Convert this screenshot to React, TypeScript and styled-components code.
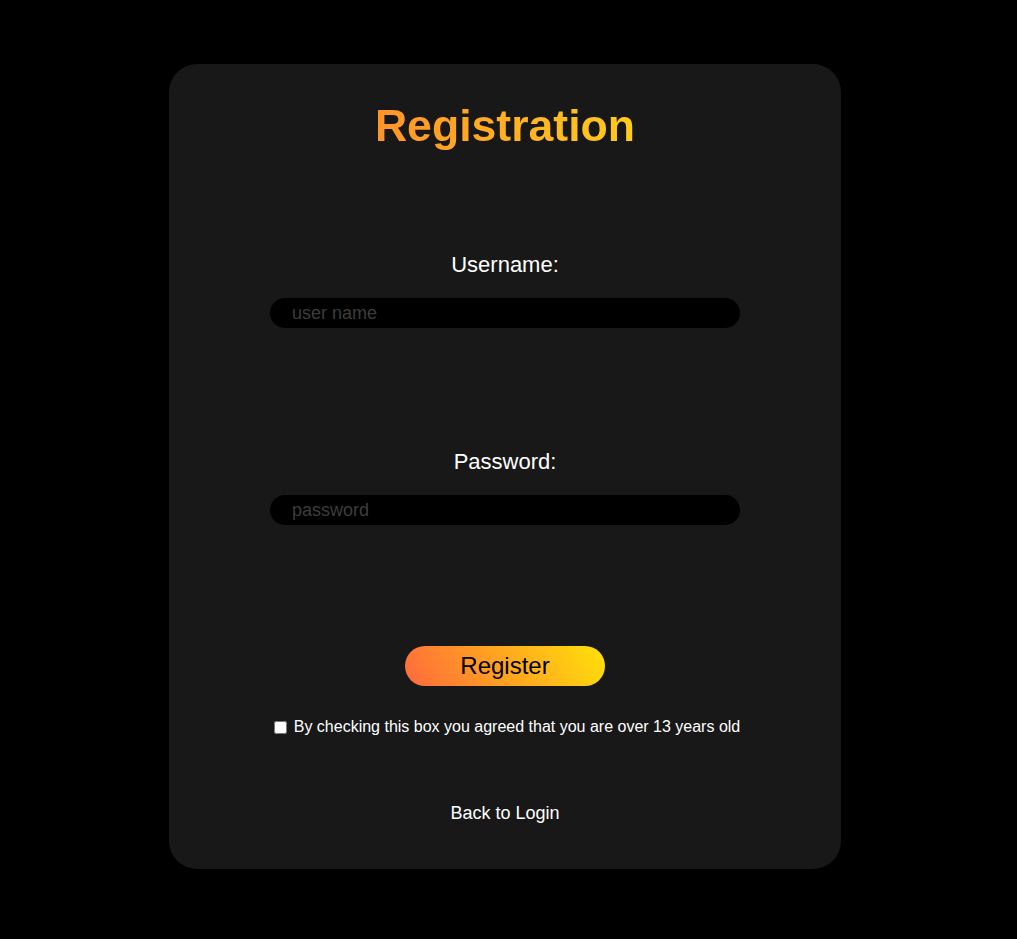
import React from "react";
import styled, { createGlobalStyle } from "styled-components";

const Global = createGlobalStyle`
  html, body { margin: 0; padding: 0; background: #000; }
  body { font-family: "Liberation Sans", Arial, sans-serif; }
  * { box-sizing: border-box; }
`;

const Page = styled.div`
  min-height: 939px;
  background: #000;
  padding-top: 64px;
  padding-left: 169px;
`;

const Card = styled.div`
  width: 672px;
  background: #181818;
  border-radius: 28px;
  padding: 37px 0 45px;
  display: flex;
  flex-direction: column;
  align-items: center;
`;

const Title = styled.h1`
  margin: 0;
  font-size: 44.6px;
  line-height: 50px;
  font-weight: 700;
  background: linear-gradient(90deg, #ff9328 0%, #ffcc1c 100%);
  -webkit-background-clip: text;
  background-clip: text;
  color: transparent;
`;

const Field = styled.div<{ $top: number }>`
  margin-top: ${(p) => p.$top}px;
  display: flex;
  flex-direction: column;
  align-items: center;
  gap: 20px;
`;

const Label = styled.label`
  color: #fff;
  font-size: 22px;
  line-height: 26px;
`;

const Input = styled.input`
  width: 470px;
  height: 30px;
  border: none;
  outline: none;
  border-radius: 15px;
  background: #000;
  color: #ccc;
  padding: 0 22px;
  font-family: "Liberation Sans", Arial, sans-serif;
  font-size: 18px;
  &::placeholder { color: #3d3d3d; }
`;

const Button = styled.button`
  margin-top: 121px;
  width: 200px;
  height: 40px;
  border: none;
  border-radius: 20px;
  background: linear-gradient(60deg, #ff6a3d 0%, #ffa51f 50%, #ffe10a 100%);
  color: #000;
  font-family: "Liberation Sans", Arial, sans-serif;
  font-size: 24px;
  cursor: pointer;
`;

const CheckRow = styled.label`
  margin-top: 31px;
  padding-left: 4px;
  display: flex;
  align-items: center;
  gap: 4px;
  color: #fff;
  font-size: 16px;
  line-height: 20px;
  input { margin: 0 3px 0 0; width: 13px; height: 13px; }
`;

const BackLink = styled.a`
  margin-top: 65px;
  color: #fff;
  font-size: 18px;
  line-height: 22px;
  text-decoration: none;
`;

export default function App() {
  return (
    <>
      <Global />
      <Page>
        <Card>
          <Title>Registration</Title>
          <Field $top={101}>
            <Label htmlFor="u">Username:</Label>
            <Input id="u" placeholder="user name" />
          </Field>
          <Field $top={121}>
            <Label htmlFor="p">Password:</Label>
            <Input id="p" type="password" placeholder="password" />
          </Field>
          <Button>Register</Button>
          <CheckRow>
            <input type="checkbox" />
            By checking this box you agreed that you are over 13 years old
          </CheckRow>
          <BackLink href="#">Back to Login</BackLink>
        </Card>
      </Page>
    </>
  );
}
